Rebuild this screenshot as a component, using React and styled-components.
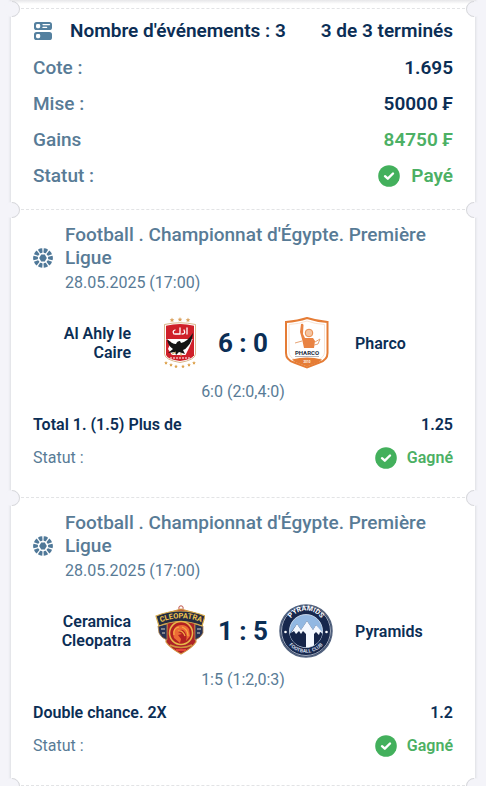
import styled, { createGlobalStyle } from "styled-components";

const events = [
	{
		league: "Football . Championnat d'Égypte. Première Ligue",
		date: "28.05.2025 (17:00)",
		home: { name: "Al Ahly le Caire", Logo: AlAhlyLogo },
		away: { name: "Pharco", Logo: PharcoLogo },
		score: "6 : 0",
		periods: "6:0 (2:0,4:0)",
		bet: "Total 1. (1.5) Plus de",
		odds: "1.25",
		status: "Gagné",
	},
	{
		league: "Football . Championnat d'Égypte. Première Ligue",
		date: "28.05.2025 (17:00)",
		home: { name: "Ceramica Cleopatra", Logo: CleopatraLogo },
		away: { name: "Pyramids", Logo: PyramidsLogo },
		score: "1 : 5",
		periods: "1:5 (1:2,0:3)",
		bet: "Double chance. 2X",
		odds: "1.2",
		status: "Gagné",
	},
];

function App() {
	return (
		<>
			<GlobalStyle />
			<Ticket>
				<Stub />
				<Summary>
					<SummaryHeader>
						<EventsIcon />
						<span>Nombre d'événements : 3</span>
						<Finished>3 de 3 terminés</Finished>
					</SummaryHeader>
					<SummaryRow>
						<dt>Cote :</dt>
						<Value>1.695</Value>
					</SummaryRow>
					<SummaryRow>
						<dt>Mise :</dt>
						<Value>50000 ₣</Value>
					</SummaryRow>
					<SummaryRow>
						<dt>Gains</dt>
						<Value $won>84750 ₣</Value>
					</SummaryRow>
					<SummaryRow>
						<dt>Statut :</dt>
						<Value $won>
							<CheckIcon />
							Payé
						</Value>
					</SummaryRow>
				</Summary>
				{events.map((event) => (
					<Event key={event.home.name} {...event} />
				))}
				<Section />
			</Ticket>
		</>
	);
}

export default App;

function Event({ league, date, home, away, score, periods, bet, odds, status }) {
	return (
		<EventSection>
			<EventHeader>
				<BallIcon />
				<div>
					<League>{league}</League>
					<DateText>{date}</DateText>
				</div>
			</EventHeader>
			<Match>
				<Team $home>{home.name}</Team>
				<home.Logo />
				<Score>{score}</Score>
				<away.Logo />
				<Team>{away.name}</Team>
			</Match>
			<Periods>{periods}</Periods>
			<BetRow>
				<span>{bet}</span>
				<span>{odds}</span>
			</BetRow>
			<StatusRow>
				<span>Statut :</span>
				<Won>
					<CheckIcon />
					{status}
				</Won>
			</StatusRow>
		</EventSection>
	);
}

function EventsIcon() {
	return (
		<svg width="20" height="20" viewBox="0 0 20 20" aria-hidden="true">
			<rect x="1" y="1" width="18" height="8" rx="2.6" fill="#54809f" />
			<rect x="3" y="3" width="4.2" height="4.2" rx="1.4" fill="#fff" />
			<path d="M10 3.600h6.500M10 6.400h3.600" stroke="#fff" strokeWidth="1.300" strokeLinecap="round" />
			<rect x="1" y="11" width="18" height="8" rx="2.6" fill="#54809f" />
			<rect x="3" y="13" width="4.200" height="4.200" rx="1.400" fill="#fff" />
		</svg>
	);
}

function BallIcon() {
	return (
		<svg width="20" height="20" viewBox="0 0 20 20" aria-hidden="true">
			<path d="M8.200 6.600h3.600L13.800 10l-2 3.400H8.200L6.200 10z" fill="#4f7898" />
			{[0, 36, 72, 108, 144, 180, 216, 252, 288, 324].map((angle) => (
				<path
					key={angle}
					d="M15.300 8.800 19.500 7.700Q20.300 10 19.500 12.300L15.300 11.200Q14.700 10 15.300 8.800z"
					transform={`rotate(${angle} 10 10)`}
					fill="#4f7898"
				/>
			))}
		</svg>
	);
}

function CheckIcon() {
	return (
		<svg width="22" height="22" viewBox="0 0 22 22" aria-hidden="true">
			<circle cx="11" cy="11" r="10.8" fill="#43b05c" />
			<path
				d="M7 11.200l2.800 2.500 5.200-5.200"
				fill="none"
				stroke="#fff"
				strokeWidth="2.400"
				strokeLinecap="round"
				strokeLinejoin="round"
			/>
		</svg>
	);
}

const starPath =
	"M0-2.4L.7-.8 2.3-.7 1.1.4 1.4 2 0 1.2-1.4 2-1.1.4-2.3-.7-.7-.8z";

function AlAhlyLogo() {
	return (
		<svg width="50" height="54" viewBox="0 0 50 54" aria-hidden="true">
			{[[17, 4], [25, 3.5], [33, 4]].map(([x, y]) => (
				<path key={x} d={starPath} transform={`translate(${x} ${y})`} fill="#d9a05b" />
			))}
			<path d="M9.5 8.5Q25 5 40.500 8.500V38Q40 44 25 46.500 10 44 9.500 38z" fill="#fff" stroke="#cfa56d" strokeWidth=".8" />
			<path d="M11 9.700Q25 6.500 39 9.700V23H11z" fill="#cf2029" />
			<path d="M11 39h28q-1.500 4.500-14 6-12.500-1.500-14-6z" fill="#cf2029" />
			<path d="M11 23l5 3-3 7 4 6h-6zM39 20v20h-9l4-8z" fill="#cf2029" />
			<path
				d="M19 18q-2-3 1-4m0 4h5v-6m2 6q4 0 2-4m3 4v-6"
				fill="none"
				stroke="#fff"
				strokeWidth="1.300"
				strokeLinecap="round"
			/>
			<path
				d="M12 23q5 5 9 5 1-3 4-3l1 2q6-1 12-10-1 9-5 13-2 3-5 4l2 4-6-2-3 3-1-3-7 1 5-4q-5-3-6-10z"
				fill="#141414"
			/>
			<path d="M21 36l-4 2m9-1v3" stroke="#c9a24d" strokeWidth="1" />
			<path d="M15 42h20" stroke="#fff" strokeWidth="1.200" strokeDasharray="2 1" />
			{[[11, 47], [16, 49], [21, 50.500], [28, 50.500], [34, 49], [39, 47]].map(([x, y]) => (
				<path key={x} d={starPath} transform={`translate(${x} ${y}) scale(.8)`} fill="#dda24c" />
			))}
		</svg>
	);
}

function PharcoLogo() {
	return (
		<svg width="50" height="54" viewBox="0 0 50 54" aria-hidden="true">
			<path
				d="M5 6Q17 5 26 2q9 3 20.500 4v31q0 7-8 9.500L26 51.500 13 46.500Q5 44 5 37z"
				fill="#fff"
				stroke="#e57c35"
				strokeWidth="2"
			/>
			<path d="M8 8.500Q18 8 26 5q8 3 17.500 3.500V36q0 5-6 7.500L26 48l-12-4.500Q8 41 8 36z" fill="none" stroke="#f7dcc9" strokeWidth=".8" />
			<path d="M11 43.500Q26 39.500 41 43.500q-2 2-4 3L26 50.500 14 46z" fill="#e57c35" />
			<circle cx="28" cy="17" r="3.800" fill="#f5c4a0" stroke="#e98a4a" strokeWidth="1" />
			<path d="M20 8q2-1 2.500 1L22 18l2 4h8l2 3-1 7H23l-2-9-2-7z" fill="#e98343" />
			<path d="M14 27l7-2m13 1 5-3-2 5-4 1" fill="none" stroke="#e7a475" strokeWidth="1" />
			<LogoText x="26" y="38.500" fontSize="6" fill="#222b40">PHARCO</LogoText>
			<path d="M14 40.500h24" stroke="#a1a1a8" strokeWidth=".8" />
			<LogoText x="26" y="47" fontSize="3" fill="#fff">2010</LogoText>
		</svg>
	);
}

function CleopatraLogo() {
	return (
		<svg width="50" height="54" viewBox="0 0 50 54" aria-hidden="true">
			<circle cx="26" cy="4" r="2.200" fill="#fff" stroke="#bd5148" strokeWidth="1" />
			<path d="M12 9L26 5l14 4 3 8-3 4 1 17q-4 6-15 12Q15 44 11 38l1-17-3-4z" fill="#ad2428" stroke="#d2943e" strokeWidth="1.200" />
			<path d="M3 22l9-2v16q-6-2-8-7zM48 22l-8-2v16q6-2 8-7z" fill="#273255" stroke="#bd8d51" strokeWidth=".8" />
			<path d="M6 25h4m-3 4h3m32-4h4m-4 4h3" stroke="#d9d3c2" strokeWidth="1.200" />
			<path d="M1 12Q26 2 50 12l-3 10Q26 13 4 22z" fill="#242c42" stroke="#d7ac4d" strokeWidth="1.200" />
			<path id="cleopatra-arc" d="M4 19Q26 9.500 48 19" fill="none" />
			<LogoText fontSize="7.500" fill="#f0c44e">
				<textPath href="#cleopatra-arc" startOffset="50%">CLEOPATRA</textPath>
			</LogoText>
			<circle cx="26" cy="29" r="11.500" fill="#b32121" stroke="#e7b949" strokeWidth="1.500" />
			<path d="M19 34q-3-8 3-12 8-3 12 3l1 7-4 5q2-7-3-11-4-1-5 2l4 2-4 1 3 4-1 4z" fill="#ed6b35" />
			<path d="M19 31q-1-7 5-8m-1 4q5-1 7 5m-3-9q6 2 6 9" fill="none" stroke="#f6ae45" strokeWidth="1.200" />
			<path d="M15 41q11 5 22 0" fill="none" stroke="#d2943e" strokeWidth="1.500" />
			<path d="M21 46h10" stroke="#e4453b" strokeWidth="2" />
		</svg>
	);
}

function PyramidsLogo() {
	return (
		<svg width="54" height="54" viewBox="0 0 54 54" aria-hidden="true">
			<circle cx="27" cy="27" r="26" fill="#17284d" stroke="#53637f" strokeWidth="1.500" />
			<circle cx="27" cy="27" r="24.500" fill="none" stroke="#c4ccd8" strokeWidth=".8" />
			<circle cx="27" cy="27" r="16.500" fill="#92b8e2" stroke="#dbe6f2" strokeWidth=".8" />
			<path d="M10.800 30L18 20l4 6 6-9 6 9 3-5 6.200 9A16.500 16.500 0 0 1 10.800 30z" fill="#142449" />
			<path d="M18 20l-6 9 3-2 2 3 3-3 2 3 2-3 3 3v13.500q4 0 8-2V30l2-2 3 3 1-3 3 1-7-8-3 5-6-9-6 9z" fill="#f4f8ff" />
			<path id="pyramids-top" d="M8.500 25A18.500 18.500 0 0 1 45.500 25" fill="none" />
			<path id="pyramids-bottom" d="M5 31A22.500 22.500 0 0 0 49 31" fill="none" />
			<LogoText fontSize="7" fill="#fff">
				<textPath href="#pyramids-top" startOffset="50%">PYRAMIDS</textPath>
			</LogoText>
			<LogoText fontSize="5" fill="#d1dbea">
				<textPath href="#pyramids-bottom" startOffset="50%">FOOTBALL CLUB</textPath>
			</LogoText>
			<circle cx="6.500" cy="28" r="1.300" fill="#fff" />
			<circle cx="47.500" cy="28" r="1.300" fill="#fff" />
		</svg>
	);
}

const GlobalStyle = createGlobalStyle`
	* {
		box-sizing: border-box;
	}

	body {
		margin: 0;
		overflow-x: hidden;
		background: #f4f4f9;
		color: #0b2e55;
		font-family: Roboto, "Liberation Sans", sans-serif;
	}

	svg {
		display: block;
		flex-shrink: 0;
	}
`;

const LogoText = styled.text`
	font-family: Roboto, sans-serif;
	font-weight: 700;
	text-anchor: middle;
`;

const Ticket = styled.main`
	margin: 0 11px;
	background: #fff;
	box-shadow: 0 0 2px 1px #dedfe3;
`;

const Stub = styled.div`
	height: 8px;
	background: linear-gradient(#e6e6e9, #fff 4px);
`;

/* each section starts with a perforation: dashed line and a notch on both sides */
const Section = styled.section`
	position: relative;
	padding: 0 22px;
	border-top: 1px dashed #e2e3e5;

	&::before,
	&::after {
		content: "";
		position: absolute;
		top: -8px;
		width: 14px;
		height: 14px;
		border: 1px solid #d6d7db;
		border-radius: 50%;
		background: #f4f4f9;
	}

	&::before {
		left: -7px;
		border-left-color: transparent;
		border-bottom-color: transparent;
		transform: rotate(45deg);
	}

	&::after {
		right: -7px;
		border-right-color: transparent;
		border-top-color: transparent;
		transform: rotate(45deg);
	}
`;

const Summary = styled(Section)`
	display: flex;
	flex-direction: column;
	gap: 14px;
	padding-top: 10px;
	padding-bottom: 22px;
`;

const SummaryHeader = styled.div`
	display: flex;
	align-items: center;
	gap: 17px;
	font-size: 19px;
	font-weight: 600;
	line-height: 24px;
`;

const Finished = styled.span`
	margin-left: auto;
`;

const SummaryRow = styled.dl`
	display: flex;
	align-items: center;
	justify-content: space-between;
	margin: 0;
	color: #587b96;
	font-size: 19px;
	font-weight: 500;
	line-height: 22px;
`;

const Value = styled.dd`
	display: flex;
	align-items: center;
	gap: 11px;
	margin: 0;
	color: ${({ $won }) => ($won ? "#4cb064" : "#0b2e55")};
	font-weight: 600;
`;

const EventSection = styled(Section)`
	padding-top: 13px;
	padding-bottom: 28px;
`;

const EventHeader = styled.header`
	display: flex;
	align-items: center;
	gap: 12px;
	color: #587b96;
`;

const League = styled.h2`
	margin: 0;
	font-size: 19px;
	font-weight: 500;
	line-height: 23px;
`;

const DateText = styled.p`
	margin: 4px 0 0;
	font-size: 16px;
	line-height: 20px;
`;

const Match = styled.div`
	display: grid;
	grid-template-columns: 1fr 50px 76px 50px 1fr;
	align-items: center;
	justify-items: center;
	margin-top: 23px;
`;

const Team = styled.span`
	justify-self: stretch;
	padding: ${({ $home }) => ($home ? "0 24px 0 0" : "0 0 0 24px")};
	text-align: ${({ $home }) => ($home ? "right" : "left")};
	font-size: 16px;
	font-weight: 600;
	line-height: 19px;
`;

const Score = styled.strong`
	font-size: 26px;
	font-weight: 700;
	line-height: 30px;
`;

const Periods = styled.p`
	margin: 12px 0 0;
	color: #587b96;
	font-size: 16px;
	line-height: 20px;
	text-align: center;
`;

const BetRow = styled.div`
	display: flex;
	justify-content: space-between;
	margin-top: 13px;
	font-size: 16px;
	font-weight: 600;
	line-height: 20px;
`;

const StatusRow = styled.div`
	display: flex;
	align-items: center;
	justify-content: space-between;
	margin-top: 12px;
	color: #587b96;
	font-size: 16px;
	line-height: 22px;
`;

const Won = styled.span`
	display: flex;
	align-items: center;
	gap: 10px;
	color: #4cb064;
	font-weight: 600;
`;
